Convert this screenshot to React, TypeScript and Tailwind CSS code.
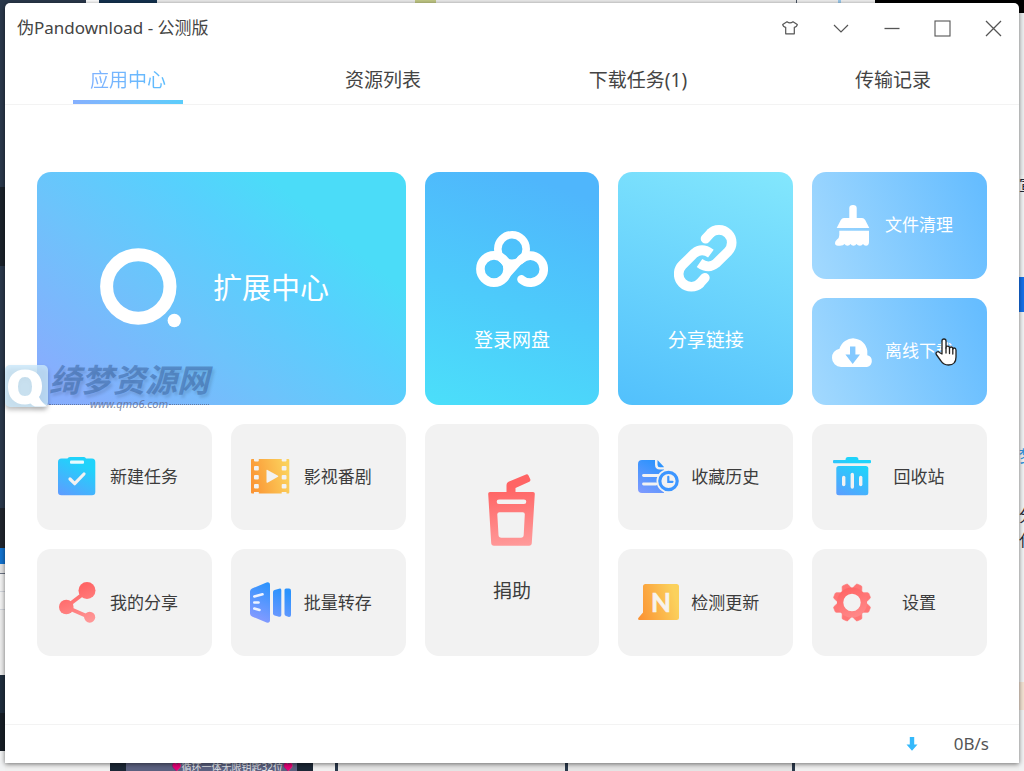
import type { ReactNode } from "react";

const FONT = `font-["Noto_Sans","Noto_Sans_CJK_SC",sans-serif]`;

/* ---------- icons ---------- */

function Gradients() {
  return (
    <svg width="0" height="0" className="absolute" aria-hidden="true">
      <defs>
        <linearGradient id="cyan" gradientUnits="userSpaceOnUse" x1="4" y1="40" x2="22" y2="6">
          <stop offset="0" stopColor="#5f9bff" />
          <stop offset="1" stopColor="#20d3fb" />
        </linearGradient>
        <linearGradient id="blue" gradientUnits="userSpaceOnUse" x1="6" y1="40" x2="24" y2="4">
          <stop offset="0" stopColor="#8a9bff" />
          <stop offset="1" stopColor="#2b93fd" />
        </linearGradient>
        <linearGradient id="orange" gradientUnits="userSpaceOnUse" x1="0" y1="26" x2="38" y2="16">
          <stop offset="0" stopColor="#fb9434" />
          <stop offset="1" stopColor="#fbd15c" />
        </linearGradient>
        <linearGradient id="red" gradientUnits="userSpaceOnUse" x1="14" y1="8" x2="28" y2="40">
          <stop offset="0" stopColor="#ff6565" />
          <stop offset="1" stopColor="#ff9696" />
        </linearGradient>
        <linearGradient id="cup" gradientUnits="userSpaceOnUse" x1="20" y1="14" x2="27" y2="72">
          <stop offset="0" stopColor="#ff6464" />
          <stop offset="1" stopColor="#ff9a9a" />
        </linearGradient>
        <linearGradient id="gear" gradientUnits="userSpaceOnUse" x1="-6" y1="-14" x2="8" y2="20">
          <stop offset="0" stopColor="#ff6666" />
          <stop offset="1" stopColor="#ff9090" />
        </linearGradient>
      </defs>
    </svg>
  );
}

function RingIcon() {
  return (
    <svg width="82" height="80" viewBox="0 0 82 80" fill="none" className="shrink-0">
      <circle cx="38.3" cy="38.5" r="31.7" stroke="#fff" strokeWidth="13" />
      <circle cx="74.3" cy="72.5" r="6.7" fill="#fff" />
    </svg>
  );
}

function NetdiskIcon() {
  return (
    <svg width="72" height="58" viewBox="0 0 72 58" fill="none" stroke="#fff">
      <circle cx="36" cy="19" r="14.2" strokeWidth="7.600" />
      <circle cx="18" cy="39" r="13.6" strokeWidth="8.600" />
      <path d="M45 29.300A13.500 13.500 0 1 1 45.500 49.400" strokeWidth="8.600" strokeLinecap="round" />
      <path d="M26 32L36 30L47 30L49 30L28 53.500L22 56L25 47L28 40Z" fill="#fff" stroke="none" />
    </svg>
  );
}

function LinkIcon() {
  return (
    <svg width="63" height="67" viewBox="0 0 63 67" fill="none" stroke="#fff" strokeWidth="9.6">
      <path d="M36 8.6A12.7 12.7 0 0 1 54 26.6L42 38.4Q34.500 44.500 25.500 38" />
      <path d="M31.500 13.800L36.200 8.600" strokeLinecap="round" />
      <path d="M26.400 58A12.7 12.7 0 0 1 8.400 40L20.400 28.200Q27.900 22.100 36.900 28.600" />
      <path d="M30.900 52.800L26.200 58" strokeLinecap="round" />
    </svg>
  );
}

function BroomIcon() {
  return (
    <svg width="35" height="41" viewBox="0 0 35 41" fill="#fff">
      <path d="M14.300 3Q14.300 0 18 0T21.700 3V13H27Q29 13 30.200 15L34.300 23H1.700L5.800 15Q7 13 9 13H14.300Z" />
      <path d="M4.300 25.700H34V37Q34 40.700 31 40.700Q29 40.700 28 39Q27 40.700 25 40.700Q22.500 40.700 21.500 39Q20.500 40.700 18.500 40.700Q16.500 40.700 15.500 39Q14.500 40.700 12.500 40.700Q10.500 40.700 9.500 39Q8.500 40.700 5 40.700H3Q0 40.700 0 38Q0 36 2 34.500Q4.300 33 4.300 30Z" />
    </svg>
  );
}

function CloudIcon() {
  return (
    <svg width="41" height="31" viewBox="0 0 41 31" className="shrink-0">
      <path d="M9 31A9 9 0 0 1 0 22Q0 14.500 7.500 12.800A14.200 14.200 0 0 1 35.300 15V19.300A6 6 0 0 1 35 31Z" fill="#fff" />
      <path d="M18 10.500H23.400V18.500H28L20.700 28L13.400 18.500H18Z" fill="#84c9ff" />
    </svg>
  );
}

function ClipboardIcon() {
  return (
    <svg width="38" height="39" viewBox="0 0 38 39">
      <path d="M3.500 1.500H9.500Q10 0 12 0H26Q27.500 0 28 1.500H34Q37.300 1.500 37.300 5V35Q37.300 38.300 34 38.300H3.500Q0 38.300 0 35V5Q0 1.500 3.500 1.500Z" fill="url(#cyan)" />
      <rect x="12" y="3.500" width="14" height="3.300" rx="1" fill="#e9fbff" />
      <path d="M12 22L16.700 26.700L26 17" fill="none" stroke="#f2f2f2" strokeWidth="3.200" strokeLinecap="round" strokeLinejoin="round" />
    </svg>
  );
}

function FilmIcon() {
  const holes = [-2, 7, 16, 25];
  return (
    <svg width="39" height="35" viewBox="0 0 39 35">
      <rect width="38.300" height="34.500" rx="1" fill="url(#orange)" />
      <g fill="#f2f2f2">
        {holes.map((y) => (
          <g key={y}>
            <rect x="3" y={y} width="4.800" height="4.500" rx="1" />
            <rect x="30.700" y={y} width="4.800" height="4.500" rx="1" />
          </g>
        ))}
        <rect x="3" y="33" width="4.800" height="3" />
        <rect x="30.700" y="33" width="4.800" height="3" />
        <path d="M15.500 11.500Q15.500 10.500 16.500 11L27 16.700Q27.800 17.200 27 17.700L16.500 23.700Q15.500 24 15.500 23Z" />
      </g>
    </svg>
  );
}

function ShareIcon() {
  return (
    <svg width="37" height="41" viewBox="0 0 37 41">
      <g stroke="url(#red)" strokeWidth="3.800">
        <path d="M7 25L28 9" />
        <path d="M7 25L31 35.500" />
      </g>
      <g fill="url(#red)">
        <circle cx="28" cy="8.500" r="8.500" />
        <circle cx="7.300" cy="25" r="7.300" />
        <circle cx="30.700" cy="35.200" r="5.500" />
      </g>
    </svg>
  );
}

function BatchIcon() {
  return (
    <svg width="41" height="41" viewBox="0 0 41 41">
      <g fill="url(#blue)">
        <path d="M2 6.500L16.500 .4Q20 -.4 20 3V38Q20 41.400 16.500 40.600L2 34.500Q0 33.500 0 31.500V9.500Q0 7.300 2 6.500Z" />
        <path d="M23 10Q23 8.500 24.500 8L29 6.700Q31.300 6.200 31.300 8V33Q31.300 35.300 29 34.700L24.500 33.500Q23 33 23 31.500Z" />
        <path d="M34.500 8Q34.500 6.500 36 6.500H39Q41 6.500 41 8.500V33Q41 35 39 35L36 34Q34.500 33.500 34.500 32Z" />
      </g>
      <g stroke="#eef3ff" strokeWidth="2.600" strokeLinecap="round">
        <path d="M4.300 14.500L12.500 12.300" />
        <path d="M4.300 20.500H8.500" />
        <path d="M4.300 26.500L9.500 28" />
      </g>
    </svg>
  );
}

function CupIcon() {
  return (
    <svg width="47" height="72" viewBox="0 0 47 72">
      <path
        fill="url(#cup)"
        fillRule="evenodd"
        d="M2 18H18.500V11Q18.500 8.800 20.500 7.800L38 .4Q39.600 -.2 40.400 1.300L42.300 5.300Q42.800 7 41.300 7.700L27.500 14V18H45Q47 18 46.800 20L43.800 69Q43.600 71.700 41 71.700H6Q3.400 71.700 3.200 69L.2 20Q0 18 2 18ZM11 25.500Q8.700 25.500 8.700 27.800T11 30H36Q38.300 30 38.300 27.800T36 25.500ZM11.500 38.200Q9.200 38.200 9.300 40.500L10.500 61Q10.700 63.700 13.300 63.700H33Q35.500 63.700 35.700 61L36.800 40.500Q37 38.200 34.700 38.200Z"
      />
    </svg>
  );
}

function HistoryIcon() {
  return (
    <svg width="41" height="34" viewBox="0 0 41 34">
      <path d="M4 0H17V4.500Q17 9.500 22 9.500H26V33H4Q0 33 0 29V4Q0 0 4 0Z" fill="url(#blue)" />
      <path d="M19.500 0L25.800 6.700V7.300H22Q19.500 7.300 19.500 5Z" fill="#2f94fd" />
      <g stroke="#f2f2f2" strokeWidth="2.800" strokeLinecap="round">
        <path d="M5.500 15.500H20" />
        <path d="M5.500 24H18" />
      </g>
      <circle cx="30.500" cy="21" r="12" fill="#f2f2f2" />
      <circle cx="30.500" cy="21" r="8.700" fill="none" stroke="#3d96ff" strokeWidth="3.200" />
      <path d="M30.300 16.800V21.800H34.500" fill="none" stroke="#3d96ff" strokeWidth="2.200" strokeLinecap="round" />
    </svg>
  );
}

function TrashIcon() {
  return (
    <svg width="38" height="39" viewBox="0 0 38 39">
      <path d="M1 3H12.500Q12.500 0 15 0H23Q25.500 0 25.500 3H37Q38 3 38 4V5.300Q38 6.300 37 6.300H1Q0 6.300 0 5.300V4Q0 3 1 3Z" fill="url(#cyan)" />
      <rect x="3.300" y="9" width="32" height="29.300" rx="2.500" fill="url(#cyan)" />
      <g stroke="#f2f2f2" strokeWidth="3.400" strokeLinecap="round">
        <path d="M10.700 20.500V27.500" />
        <path d="M19.300 17.500V30" />
        <path d="M27.700 20.500V27.500" />
      </g>
    </svg>
  );
}

function UpdateIcon() {
  return (
    <svg width="41" height="37" viewBox="0 0 41 37">
      <path d="M7.500 0H38.500Q41 0 41 2.500V33.500Q41 36 38.500 36H1.500Q-.5 36 .3 34L5 28.500V2.500Q5 0 7.500 0Z" fill="url(#orange)" />
      <text x="23" y="27.500" textAnchor="middle" fontSize="26" fontWeight="700" fontFamily="Lato, sans-serif" fill="#f7f3ec" stroke="#f7f3ec" strokeWidth=".6">
        N
      </text>
    </svg>
  );
}

function GearIcon() {
  // teeth sit between the axes, so the gear is flat on top
  return (
    <svg width="38" height="39" viewBox="-19.500 -19.500 39 39">
      <g fill="#ff7676" stroke="#ff7676" strokeWidth=".6">
        {[22.500, 67.500, 112.500, 157.500, 202.500, 247.500, 292.500, 337.500].map((a) => (
          <path
            key={a}
            d="M-5.400 -13L-3.300 -18.500Q-2.900 -19.500 -1.900 -19.500H1.900Q2.900 -19.500 3.300 -18.500L5.400 -13Z"
            transform={`rotate(${a})`}
          />
        ))}
      </g>
      <circle r="12.200" fill="none" stroke="url(#gear)" strokeWidth="6.500" />
    </svg>
  );
}

function PointerIcon() {
  return (
    <svg width="22" height="28" viewBox="0 0 22 28" fill="#fff" stroke="#222" strokeWidth="1.300" strokeLinejoin="round" strokeLinecap="round">
      <path d="M7 16V3Q7 1 9 1T11 3V10Q11 8.200 12.700 8.200T14.500 10V10.500Q14.500 9 16.200 9T17.800 11Q18 10 19.400 10T21 12V19Q21 27 13.500 27Q8.500 27 6 23L1.300 16.500Q.5 14.800 2 14T4.500 14.500Z" />
      <path d="M11 10V15M14.500 10.500V15.500M17.800 11V16" />
    </svg>
  );
}

/* ---------- what shows around the window ---------- */

function Desktop() {
  return (
    <div className="absolute inset-0 flex overflow-hidden bg-[#f1f2f3]" aria-hidden="true">
      <div className="flex w-[5px] flex-col overflow-hidden">
        <div className="h-[187px] shrink-0 bg-[#2a384b]" />
        <div className="h-[79px] shrink-0 bg-[#1b222a]" />
        <div className="h-[242px] shrink-0 bg-[#2a384b]" />
        <div className="h-[40px] shrink-0 bg-[#20252d]" />
        <div className="h-[16px] shrink-0 bg-[#1373cf]" />
        <div className="h-[10px] shrink-0 border-b border-gray-500 bg-[#e5e5e5]" />
        <div className="h-[18px] shrink-0 border-b border-gray-300 bg-[#f2f2f2]" />
        <div className="h-[18px] shrink-0 border-b border-gray-300 bg-[#f2f2f2]" />
        <div className="h-[65px] shrink-0 bg-[#ececec]" />
        <div className="h-[38px] shrink-0 bg-[#1f2d3d]" />
        <div className="h-[38px] shrink-0 bg-[#171e26]" />
      </div>

      <div className="flex min-w-0 flex-1 flex-col justify-between">
        <div className="flex h-[9px]">
          <div className="w-[81px] bg-[#2a384b]" />
          <div className="w-[13px] bg-white" />
          <div className="w-[58px] bg-[#13324f]" />
          <div className="w-[258px] bg-[#ededed]" />
          <div className="w-[21px] bg-[#c3ca86]" />
          <div className="w-[360px] bg-[#ededed]" />
          <div className="w-px bg-gray-600" />
          <div className="w-[41px] bg-[#f1f1f1]" />
          <div className="w-[3px] bg-[#9ccbee]" />
          <div className="w-[34px] bg-[#f1f1f1]" />
          <div className="flex-1 bg-black" />
        </div>
        <div className="flex h-[9px] overflow-hidden">
          <div className="w-[105px] bg-[#f0f0f0]" />
          <div className="flex w-[203px] items-center justify-end border-x-[16px] border-[#1c2836] bg-[#5b6180] pr-1 text-[10px] leading-3 whitespace-nowrap text-gray-200">
            <span className="text-pink-600">♥</span>循环一体无限钥匙32位<span className="text-pink-600">♥</span>
          </div>
          <div className="w-[22px] bg-[#f0f0f0]" />
          <div className="w-[230px] border-l-[3px] border-[#2a384b] bg-[#e4e4e4]" />
          <div className="w-[230px] border-x-[3px] border-[#2a384b] bg-[#e4e4e4]" />
          <div className="flex-1 bg-[#f0f0f0]" />
        </div>
      </div>

      <div className="flex w-[5px] flex-col overflow-hidden text-base leading-5 text-gray-800">
        <div className="h-[13px] shrink-0 bg-black" />
        <div className="h-[162px] shrink-0 bg-[#eceeef]" />
        <div className="h-[102px] shrink-0">宣</div>
        <div className="h-[35px] shrink-0 bg-[#1471ea]" />
        <div className="h-[134px] shrink-0" />
        <div className="h-[59px] shrink-0 text-[#2d94dd]">梦</div>
        <div className="h-[25px] shrink-0">分</div>
        <div className="h-[152px] shrink-0">代</div>
        <div className="h-[28px] shrink-0 bg-[#f3e2d3]" />
      </div>
    </div>
  );
}

/* ---------- window ---------- */

function TitleBar() {
  const btn = "flex h-full w-[51px] items-center justify-center text-[#555]";
  return (
    <header className="flex h-[50px] items-center justify-between pl-3">
      <h1 className="text-[17px] leading-6 text-[#444]">伪Pandownload - 公测版</h1>
      <div className="flex h-full">
        <button aria-label="皮肤" className={btn}>
          <svg width="16" height="14" viewBox="0 0 16 14" fill="none" stroke="currentColor" strokeWidth="1.200" strokeLinejoin="round">
            <path d="M5 .8Q8 3 11 .8L15.300 3.500Q15 6 12.300 6.300V12.800H3.700V6.300Q1 6 .7 3.500Z" />
          </svg>
        </button>
        <button aria-label="菜单" className={btn}>
          <svg width="16" height="9" viewBox="0 0 16 9" fill="none" stroke="currentColor" strokeWidth="1.200">
            <path d="M1 1L8 8L15 1" />
          </svg>
        </button>
        <button aria-label="最小化" className={btn}>
          <svg width="16" height="16" viewBox="0 0 16 16" stroke="currentColor" strokeWidth="1.300">
            <path d="M.5 8.500H15.500" />
          </svg>
        </button>
        <button aria-label="最大化" className={btn}>
          <svg width="17" height="17" viewBox="0 0 17 17" fill="none" stroke="currentColor" strokeWidth="1.100">
            <rect x="1" y="1" width="15" height="15" />
          </svg>
        </button>
        <button aria-label="关闭" className={btn}>
          <svg width="17" height="17" viewBox="0 0 17 17" stroke="currentColor" strokeWidth="1.300">
            <path d="M1 1L16 16M16 1L1 16" />
          </svg>
        </button>
      </div>
    </header>
  );
}

const tabs = ["应用中心", "资源列表", "下载任务(1)", "传输记录"];

function Tabs() {
  return (
    <nav className="flex justify-between border-b border-[#f3f3f3] pr-[71px] pl-[68px]">
      {tabs.map((t, i) => (
        <button key={t} className="flex h-[51px] w-[110px] flex-col items-center pt-[3px] text-[19px] whitespace-nowrap text-[#444]">
          {i === 0 ? (
            <>
              <span className="flex flex-1 items-center bg-linear-to-r from-[#7fb2ff] to-[#5bbcfd] bg-clip-text pt-1 text-transparent">{t}</span>
              <span className="h-1 w-full bg-linear-to-r from-[#85b0fe] to-[#5bcdfb]" />
            </>
          ) : (
            <span className="flex flex-1 items-center">{t}</span>
          )}
        </button>
      ))}
    </nav>
  );
}

type TileProps = { icon: ReactNode; label: string; className?: string };

function Tile({ icon, label, className = "bg-[#f2f2f2] text-[#3c3c3c]" }: TileProps) {
  return (
    <button className={`flex items-center rounded-[14px] pr-[22px] pl-[19px] ${className}`}>
      <span className="flex w-[42px] shrink-0 justify-center">{icon}</span>
      <span className="flex-1 text-center text-[17px] leading-6 whitespace-nowrap">{label}</span>
    </button>
  );
}

function TallTile({ icon, label, className = "" }: TileProps) {
  return (
    <button className={`row-span-2 flex flex-col items-center justify-center gap-[31px] rounded-[14px] ${className}`}>
      <span className="flex h-[72px] items-center">{icon}</span>
      <span className="text-[19px] leading-7">{label}</span>
    </button>
  );
}

const paleBlue = "bg-[linear-gradient(70deg,#a3d9fe,#66bdff_95%)] text-white";

function AppGrid() {
  return (
    <main className="grid flex-1 grid-cols-5 grid-rows-4 gap-[19px] px-8 pt-[67px] pb-[68px]">
      <button className="col-span-2 row-span-2 flex items-center gap-[31px] rounded-[14px] bg-[linear-gradient(40deg,#86aefd_8%,#6dc3fb_38%,#57d0fd_62%,#4bdcf8_78%)] pl-[63px]">
        <RingIcon />
        <span className="text-[29px] leading-10 text-white">扩展中心</span>
      </button>
      <TallTile icon={<NetdiskIcon />} label="登录网盘" className="bg-[linear-gradient(20deg,#4bdffa,#4fb6fc_90%)] text-white" />
      <TallTile icon={<LinkIcon />} label="分享链接" className="bg-[linear-gradient(20deg,#52c0fc,#83e7fd)] text-white" />
      <Tile icon={<BroomIcon />} label="文件清理" className={paleBlue} />
      <Tile icon={<CloudIcon />} label="离线下载" className={paleBlue} />

      <Tile icon={<ClipboardIcon />} label="新建任务" />
      <Tile icon={<FilmIcon />} label="影视番剧" />
      <TallTile icon={<CupIcon />} label="捐助" className="bg-[#f2f2f2] text-[#3c3c3c]" />
      <Tile icon={<HistoryIcon />} label="收藏历史" />
      <Tile icon={<TrashIcon />} label="回收站" />
      <Tile icon={<ShareIcon />} label="我的分享" />
      <Tile icon={<BatchIcon />} label="批量转存" />
      <Tile icon={<UpdateIcon />} label="检测更新" />
      <Tile icon={<GearIcon />} label="设置" />
    </main>
  );
}

function Watermark() {
  return (
    <div className="pointer-events-none absolute top-[359px] left-0 flex items-center">
      <svg width="44" height="46" viewBox="0 0 44 46" className="drop-shadow-[0_3px_2px_rgba(0,0,0,0.3)]">
        <rect width="43" height="42" y="2" rx="5" fill="#c9e7fa" fillOpacity=".8" />
        <path
          fill="#fff"
          fillRule="evenodd"
          d="M20 6.500C31 6.500 37 13 37 23Q37 30 34 34Q36.500 39.500 42 43.500H30Q27 42.500 25.500 40.500Q23 41.500 20 41.500C9 41.500 3 34 3 24S9 6.500 20 6.500ZM20 14Q13 14 13 23.500T20 33T27 23.500T20 14Z"
        />
      </svg>
      <div className="flex flex-col">
        <span className="text-[32px] leading-9 font-bold whitespace-nowrap text-[#3f6aa6]/60 italic text-shadow-[2px_3px_3px_rgb(0_0_0/0.12)]">绮梦资源网</span>
        <span className="flex items-center gap-px text-[11px] leading-3 text-[#5a6a90]/80 italic">
          <span className="w-10 border-t border-dotted border-[#5a6a90]/80" />
          www.qmo6.com
          <span className="flex-1 border-t border-dotted border-[#5a6a90]/80" />
        </span>
      </div>
    </div>
  );
}

export default function App() {
  return (
    <div className={`relative flex min-h-screen flex-col px-[5px] pt-[3px] pb-2 ${FONT}`}>
      <Gradients />
      <Desktop />
      <div className="relative flex flex-1 flex-col rounded-t-[5px] bg-white shadow-[0_1px_5px_rgba(0,0,0,0.55)]">
        <TitleBar />
        <Tabs />
        <AppGrid />
        <footer className="flex h-[39px] items-center justify-end gap-9 border-t border-[#f3f3f3] pr-[30px] text-[17px] text-[#555]">
          <svg width="12" height="14" viewBox="0 0 12 14" fill="#35b9fb">
            <path d="M3.800 0H8.200V7.500H11.500L6 13.800L.5 7.500H3.800Z" />
          </svg>
          <span className="leading-6">0B/s</span>
        </footer>
        <Watermark />
        <div className="pointer-events-none absolute top-[335px] right-[62px]">
          <PointerIcon />
        </div>
      </div>
    </div>
  );
}
